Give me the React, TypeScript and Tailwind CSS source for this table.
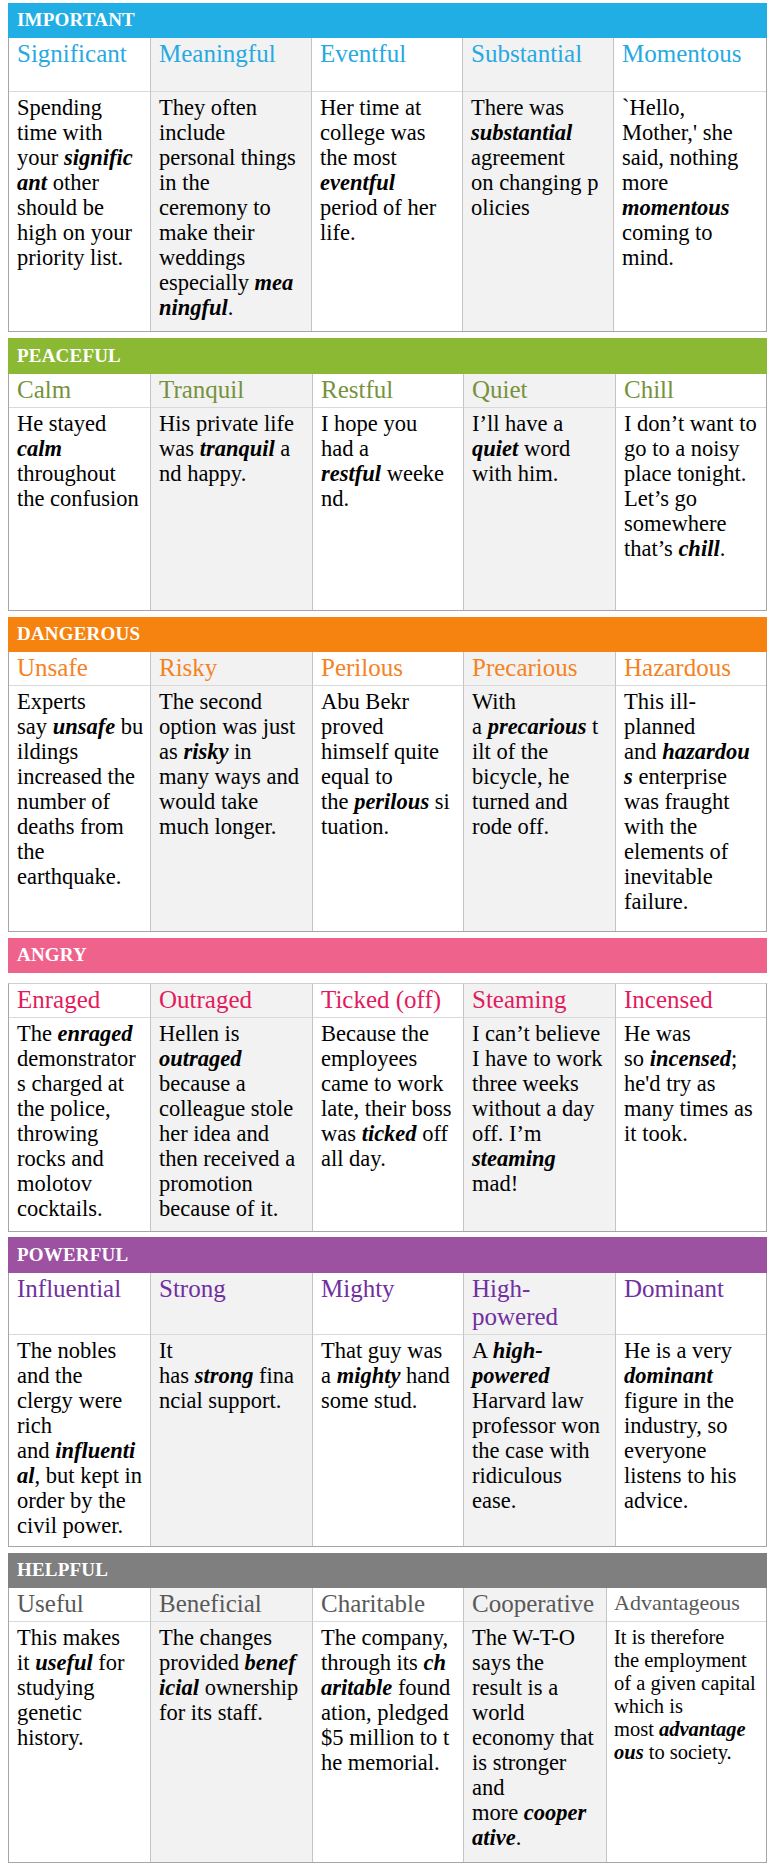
import React from "react";

type Section = {
  title: string;
  bar: string;
  barH: string;
  text: string;
  grid: string;
  headH: string;
  bodyH: string;
  spacer: boolean;
  mb: string;
  heads: string[][];
  bodies: string[][];
  lastHead?: string;
  lastBody?: string;
};

const sections: Section[] = [
  {
    title: "IMPORTANT",
    bar: "bg-[#20aee5]",
    barH: "h-[35px]",
    text: "text-[#27a9e1]",
    grid: "grid-cols-[142px_161px_151px_151px_1fr]",
    headH: "h-[54px]",
    bodyH: "h-[239px]",
    spacer: false,
    mb: "mb-[6px]",
    heads: [["Significant"], ["Meaningful"], ["Eventful"], ["Substantial"], ["Momentous"]],
    bodies: [
      ["Spending", "time with", "your **signific**", "**ant** other", "should be", "high on your", "priority list."],
      ["They often", "include", "personal things", "in the", "ceremony to", "make their", "weddings", "especially **mea**", "**ningful**."],
      ["Her time at", "college was", "the most", "**eventful**", "period of her", "life."],
      ["There was", "**substantial**", "agreement", "on changing p", "olicies"],
      ["`Hello,", "Mother,' she", "said, nothing", "more", "**momentous**", "coming to", "mind."],
    ],
  },
  {
    title: "PEACEFUL",
    bar: "bg-[#8cb934]",
    barH: "h-[36px]",
    text: "text-[#76923c]",
    grid: "grid-cols-[142px_162px_151px_152px_1fr]",
    headH: "h-[34px]",
    bodyH: "h-[202px]",
    spacer: false,
    mb: "mb-[6px]",
    heads: [["Calm"], ["Tranquil"], ["Restful"], ["Quiet"], ["Chill"]],
    bodies: [
      ["He stayed", "**calm**", "throughout", "the confusion"],
      ["His private life", "was **tranquil** a", "nd happy."],
      ["I hope you", "had a", "**restful** weeke", "nd."],
      ["I\u2019ll have a", "**quiet** word", "with him."],
      ["I don\u2019t want to", "go to a noisy", "place tonight.", "Let\u2019s go", "somewhere", "that\u2019s **chill**."],
    ],
  },
  {
    title: "DANGEROUS",
    bar: "bg-[#f6830f]",
    barH: "h-[35px]",
    text: "text-[#f5821f]",
    grid: "grid-cols-[142px_162px_151px_152px_1fr]",
    headH: "h-[34px]",
    bodyH: "h-[245px]",
    spacer: false,
    mb: "mb-[6px]",
    heads: [["Unsafe"], ["Risky"], ["Perilous"], ["Precarious"], ["Hazardous"]],
    bodies: [
      ["Experts", "say **unsafe** bu", "ildings", "increased the", "number of", "deaths from", "the", "earthquake."],
      ["The second", "option was just", "as **risky** in", "many ways and", "would take", "much longer."],
      ["Abu Bekr", "proved", "himself quite", "equal to", "the **perilous** si", "tuation."],
      ["With", "a **precarious** t", "ilt of the", "bicycle, he", "turned and", "rode off."],
      ["This ill-", "planned", "and **hazardou**", "**s** enterprise", "was fraught", "with the", "elements of", "inevitable", "failure."],
    ],
  },
  {
    title: "ANGRY",
    bar: "bg-[#ef628c]",
    barH: "h-[35px]",
    text: "text-[#e31b5c]",
    grid: "grid-cols-[142px_162px_151px_152px_1fr]",
    headH: "h-[34px]",
    bodyH: "h-[213px]",
    spacer: true,
    mb: "mb-[5px]",
    heads: [["Enraged"], ["Outraged"], ["Ticked (off)"], ["Steaming"], ["Incensed"]],
    bodies: [
      ["The **enraged**", "demonstrator", "s charged at", "the police,", "throwing", "rocks and", "molotov", "cocktails."],
      ["Hellen is", "**outraged**", "because a", "colleague stole", "her idea and", "then received a", "promotion", "because of it."],
      ["Because the", "employees", "came to work", "late, their boss", "was **ticked** off", "all day."],
      ["I can\u2019t believe", "I have to work", "three weeks", "without a day", "off. I\u2019m", "**steaming**", "mad!"],
      ["He was", "so **incensed**;", "he'd try as", "many times as", "it took."],
    ],
  },
  {
    title: "POWERFUL",
    bar: "bg-[#9c51a1]",
    barH: "h-[36px]",
    text: "text-[#7030a0]",
    grid: "grid-cols-[142px_162px_151px_152px_1fr]",
    headH: "h-[62px]",
    bodyH: "h-[211px]",
    spacer: false,
    mb: "mb-[6px]",
    heads: [["Influential"], ["Strong"], ["Mighty"], ["High-", "powered"], ["Dominant"]],
    bodies: [
      ["The nobles", "and the", "clergy were", "rich", "and **influenti**", "**al**, but kept in", "order by the", "civil power."],
      ["It", "has **strong** fina", "ncial support."],
      ["That guy was", "a **mighty** hand", "some stud."],
      ["A **high-**", "**powered**", "Harvard law", "professor won", "the case with", "ridiculous", "ease."],
      ["He is a very", "**dominant**", "figure in the", "industry, so", "everyone", "listens to his", "advice."],
    ],
  },
  {
    title: "HELPFUL",
    bar: "bg-[#7f7f7f]",
    barH: "h-[35px]",
    text: "text-[#595959]",
    grid: "grid-cols-[142px_162px_151px_143px_1fr]",
    headH: "h-[34px]",
    bodyH: "h-[240px]",
    spacer: false,
    mb: "mb-[5px]",
    heads: [["Useful"], ["Beneficial"], ["Charitable"], ["Cooperative"], ["Advantageous"]],
    bodies: [
      ["This makes", "it **useful** for", "studying", "genetic", "history."],
      ["The changes", "provided **benef**", "**icial** ownership", "for its staff."],
      ["The company,", "through its **ch**", "**aritable** found", "ation, pledged", "$5 million to t", "he memorial."],
      ["The W-T-O", "says the", "result is a", "world", "economy that", "is stronger", "and", "more **cooper**", "**ative**."],
      ["It is therefore", "the employment", "of a given capital", "which is", "most **advantage**", "**ous** to society."],
    ],
    lastHead: "text-[22px] leading-[26px] pl-[7px] pt-[2px] text-[#404040]",
    lastBody: "text-[20.5px] leading-[23px] pl-[7px] pt-[4px]",
  },
];

function Line({ text }: { text: string }) {
  const parts = text.split(/(\*\*[^*]+\*\*)/).filter((p) => p.length > 0);
  return (
    <div className="whitespace-pre">
      {parts.map((p, i) =>
        p.startsWith("**") ? (
          <span key={i} className="font-bold italic">
            {p.slice(2, -2)}
          </span>
        ) : (
          <span key={i}>{p}</span>
        )
      )}
    </div>
  );
}

function SectionBlock({ s }: { s: Section }) {
  return (
    <div className={s.mb}>
      <div
        className={`${s.bar} ${s.barH} flex items-center pl-[9px] text-[19px] font-bold text-white tracking-[0.2px]`}
      >
        {s.title}
      </div>
      {s.spacer && <div className="h-[10px]" />}
      <div
        className={`grid ${s.grid} border-x border-b border-[#a6a6a6] ${
          s.spacer ? "border-t border-t-[#cfcfcf]" : ""
        }`}
      >
        {s.heads.map((h, i) => {
          const last = i === 4;
          const shaded = i === 1 || i === 3;
          return (
            <div
              key={"h" + i}
              className={`${s.headH} ${s.text} border-b border-b-[#d9d9d9] ${
                last ? "" : "border-r border-r-[#c4c4c4]"
              } ${shaded ? "bg-[#f2f2f2]" : "bg-white"} ${
                last && s.lastHead ? s.lastHead : "text-[25px] leading-[28px] px-[8px] pt-[2px]"
              }`}
            >
              {h.map((l, j) => (
                <div key={j} className="whitespace-pre">
                  {l}
                </div>
              ))}
            </div>
          );
        })}
        {s.bodies.map((b, i) => {
          const last = i === 4;
          const shaded = i === 1 || i === 3;
          return (
            <div
              key={"b" + i}
              className={`${s.bodyH} ${last ? "" : "border-r border-r-[#c4c4c4]"} ${
                shaded ? "bg-[#f2f2f2]" : "bg-white"
              } ${
                last && s.lastBody ? s.lastBody : "text-[22.5px] leading-[25px] px-[8px] pt-[3px]"
              } text-black`}
            >
              {b.map((l, j) => (
                <Line key={j} text={l} />
              ))}
            </div>
          );
        })}
      </div>
    </div>
  );
}

export default function App() {
  return (
    <div className="w-[769px] min-h-[1868px] bg-white pt-[3px] pl-[8px] font-['Liberation_Serif',serif]">
      <div className="w-[759px]">
        {sections.map((s) => (
          <SectionBlock key={s.title} s={s} />
        ))}
      </div>
    </div>
  );
}
